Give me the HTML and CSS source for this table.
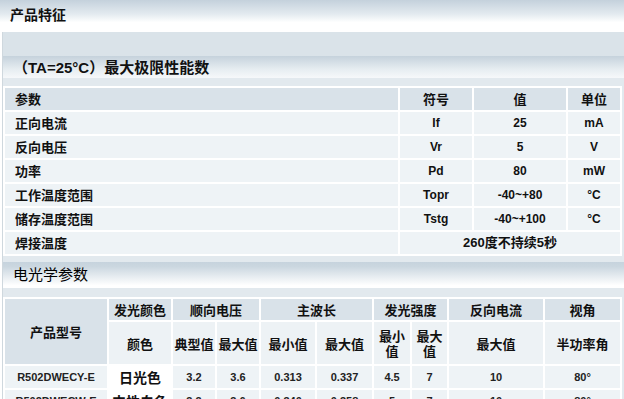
FILE: index.html
```html
<!DOCTYPE html>
<html lang="zh">
<head>
<meta charset="utf-8">
<title>产品特征</title>
<link rel="stylesheet" href="styles.css">
</head>
<body>
<div class="title-bar"><h1>产品特征</h1></div>
<div class="panel">
  <div class="blank"></div>
  <h2 class="sec-head bold">（TA=25°C）最大极限性能数</h2>
  <div class="table-wrap first">
    <table class="spec">
      <colgroup>
        <col class="w-param"><col class="w-sym"><col class="w-val"><col class="w-unit">
      </colgroup>
      <tr class="head">
        <th class="left">参数</th><th>符号</th><th>值</th><th>单位</th>
      </tr>
      <tr><th class="left">正向电流</th><td>If</td><td>25</td><td>mA</td></tr>
      <tr><th class="left">反向电压</th><td>Vr</td><td>5</td><td>V</td></tr>
      <tr><th class="left">功率</th><td>Pd</td><td>80</td><td>mW</td></tr>
      <tr><th class="left">工作温度范围</th><td>Topr</td><td>-40~+80</td><td>°C</td></tr>
      <tr><th class="left">储存温度范围</th><td>Tstg</td><td>-40~+100</td><td>°C</td></tr>
      <tr><th class="left">焊接温度</th><td colspan="3" class="cjk">260度不持续5秒</td></tr>
    </table>
  </div>
  <h2 class="sec-head second">电光学参数</h2>
  <div class="table-wrap">
    <table class="spec2">
      <colgroup>
        <col class="c1"><col class="c2"><col class="c3"><col class="c4"><col class="c5">
        <col class="c6"><col class="c7"><col class="c8"><col class="c9"><col class="c10">
      </colgroup>
      <tr class="h1">
        <th rowspan="2" class="dark">产品型号</th>
        <th>发光颜色</th>
        <th colspan="2">顺向电压</th>
        <th colspan="2">主波长</th>
        <th colspan="2">发光强度</th>
        <th>反向电流</th>
        <th>视角</th>
      </tr>
      <tr class="h2">
        <th>颜色</th>
        <th>典型值</th><th>最大值</th>
        <th>最小值</th><th>最大值</th>
        <th>最小值</th><th>最大值</th>
        <th>最大值</th>
        <th>半功率角</th>
      </tr>
      <tr class="data">
        <td>R502DWECY-E</td><td class="color">日光色</td>
        <td>3.2</td><td>3.6</td><td>0.313</td><td>0.337</td>
        <td>4.5</td><td>7</td><td>10</td><td>80°</td>
      </tr>
      <tr class="data">
        <td>R502DWECW-E</td><td class="color">中性白色</td>
        <td>3.2</td><td>3.6</td><td>0.340</td><td>0.358</td>
        <td>5</td><td>7</td><td>10</td><td>80°</td>
      </tr>
    </table>
  </div>
</div>
</body>
</html>
```
FILE: styles.css
```css
* { box-sizing: border-box; }
html, body { margin: 0; padding: 0; background: #fff; }
body {
  width: 624px;
  overflow: hidden;
  font-family: "Liberation Sans", "Noto Sans CJK SC", sans-serif;
  color: #111;
}
.title-bar {
  height: 32px;
  padding: 6px 0 0 10px;
  background: linear-gradient(#c4d1dc 0%, #e4ebf0 45%, #ffffff 70%, #ffffff 100%);
}
.title-bar h1 {
  margin: 0;
  font: bold 14px/17px "Noto Sans CJK SC", sans-serif;
  color: #111;
}
.panel {
  margin-left: 2px;
  border-left: 1px solid #cfd8de;
  background: #e2e9ee;
}
.blank { height: 24px; background: #dae3e9; }
.sec-head {
  margin: 0;
  display: flex;
  align-items: flex-end;
  padding-left: 10px;
  font-family: "Liberation Sans", "Noto Sans CJK SC", sans-serif;
  font-size: 15px;
  line-height: 18px;
  color: #111;
}
.sec-head.bold {
  height: 22px;
  font-weight: bold;
  padding-bottom: 1px;
  background: linear-gradient(#c5d2dc 0%, #e6edf1 60%, #f6f8fa 100%);
}
.sec-head.second {
  height: 26px;
  font-weight: normal;
  padding-bottom: 4px;
  color: #000;
  background: linear-gradient(#c6d3dd 0%, #cbd7e0 18%, #ffffff 90%, #ffffff 100%);
}
.table-wrap { padding: 9px 0 6px 0; }
.table-wrap.first { padding-top: 8px; }
table {
  width: 619px;
  border-collapse: separate;
  border-spacing: 2px;
  background: #fff;
  table-layout: fixed;
}
th, td {
  padding: 0;
  text-align: center;
  vertical-align: middle;
  font-weight: bold;
  color: #111;
}
.spec th { font: bold 13px/16px "Noto Sans CJK SC", sans-serif; }
.spec td { font: bold 12px/14px "Liberation Sans", "Noto Sans CJK SC", sans-serif; }
.spec td.cjk { font-size: 13px; }
.spec tr { height: 22px; }
.spec th, .spec td { background: #eef3f6; }
.spec tr.head th { background: #d9e2e9; }
.spec th.left { text-align: left; padding-left: 10px; }
.w-param { width: 393px; }
.w-sym { width: 72px; }
.w-val { width: 92px; }
.w-unit { width: 52px; }

.spec2 th { font: bold 13px/15px "Noto Sans CJK SC", sans-serif; background: #d9e2e9; }
.spec2 tr.h1 { height: 21px; }
.spec2 tr.h2 { height: 42px; }
.spec2 tr.h2 th { background: #edf2f5; }
.spec2 tr.data { height: 22px; }
.spec2 td {
  font: bold 11px/14px "Liberation Sans", "Noto Sans CJK SC", sans-serif;
  background: #eef3f6;
  color: #222;
}
.spec2 td.color {
  font: bold 14px/16px "Noto Sans CJK SC", sans-serif;
  background: #fff;
  color: #111;
}
.c1 { width: 102px; }
.c2 { width: 62px; }
.c3 { width: 42px; }
.c4 { width: 42px; }
.c5 { width: 54px; }
.c6 { width: 55px; }
.c7 { width: 36px; }
.c8 { width: 35px; }
.c9 { width: 94px; }
.c10 { width: 75px; }
```
